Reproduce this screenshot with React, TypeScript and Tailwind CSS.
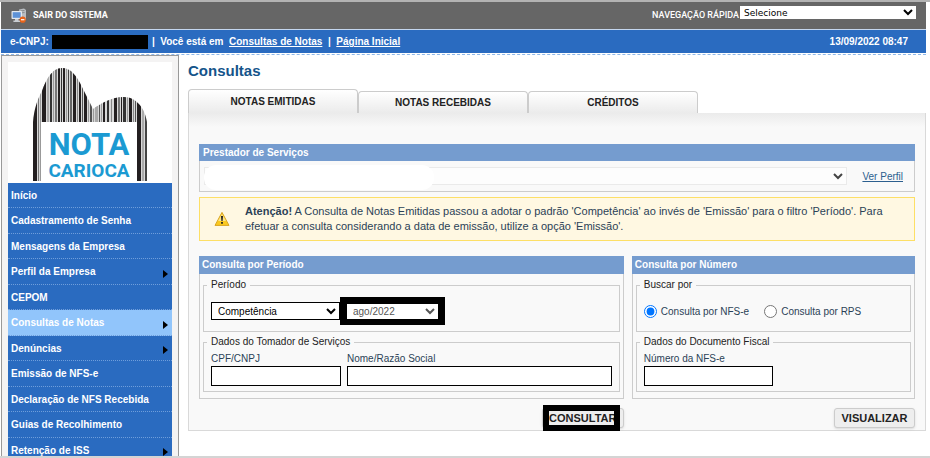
import { ReactNode, useState } from "react";

const MENU = [
  { label: "Início" },
  { label: "Cadastramento de Senha" },
  { label: "Mensagens da Empresa" },
  { label: "Perfil da Empresa", sub: true },
  { label: "CEPOM" },
  { label: "Consultas de Notas", sub: true, active: true },
  { label: "Denúncias", sub: true },
  { label: "Emissão de NFS-e" },
  { label: "Declaração de NFS Recebida" },
  { label: "Guias de Recolhimento" },
  { label: "Retenção de ISS", sub: true },
];

const TABS = ["NOTAS EMITIDAS", "NOTAS RECEBIDAS", "CRÉDITOS"];

// x, width, color
const BARS: [number, number, string][] = [
  [25, 4, "#231f20"], [30, 1, "#777"], [32, 1, "#999"], [34, 4, "#231f20"], [39, 2, "#aaa"],
  [42, 2, "#333"], [45, 1, "#999"], [47, 2, "#777"], [50, 2, "#231f20"], [53, 1, "#333"],
  [55, 2, "#231f20"], [58, 1, "#999"], [60, 1, "#444"], [62, 2, "#666"], [65, 3, "#231f20"],
  [69, 1, "#888"], [71, 2, "#231f20"], [74, 1, "#555"], [76, 3, "#231f20"], [80, 1, "#999"],
  [82, 2, "#555"], [85, 1, "#999"], [87, 3, "#aaa"], [91, 1, "#555"], [93, 1, "#999"],
  [95, 2, "#231f20"], [99, 2, "#333"], [103, 1, "#888"], [106, 3, "#231f20"], [110, 2, "#777"],
  [113, 1, "#231f20"], [115, 3, "#333"], [119, 1, "#999"], [121, 3, "#231f20"], [125, 1, "#888"],
  [127, 1, "#555"], [129, 4, "#231f20"], [134, 2, "#aaa"], [137, 2, "#444"],
];

function Logo() {
  return (
    <svg viewBox="0 0 164 121" className="block h-[121px] w-full bg-white" role="img" aria-label="Nota Carioca">
      <clipPath id="hills">
        <path d="M25 119V60C26 48 29 38 34 29C38 18 44 6 54 6C63 6 69 14 74 25L85 47C91 43 102 35 116 35C128 35 137 46 139 60V119H129V60H33V119Z" />
      </clipPath>
      <g clipPath="url(#hills)">
        <rect x="25" y="0" width="115" height="121" fill="#d8d8d8" />
        {BARS.map(([x, w, fill]) => (
          <rect key={x} x={x} y="0" width={w} height="121" fill={fill} />
        ))}
      </g>
      <g fill="#1b9ad2" fontFamily="Roboto, sans-serif" fontWeight="700" textAnchor="middle">
        <text x="81" y="93" fontSize="31">NOTA</text>
        <text x="81" y="115" fontSize="19">CARIOCA</text>
      </g>
    </svg>
  );
}

function ExitIcon() {
  return (
    <svg viewBox="0 0 16 16" className="h-4 w-4">
      <path d="M8 1.5l5-1 2 1.5v10l-5 1z" fill="#b9bdc2" />
      <path d="M9.5 3l4-.6M9.5 5l4-.5" stroke="#777" strokeWidth=".7" />
      <rect x=".5" y="3" width="10.5" height="8" rx=".7" fill="#e4e8ec" />
      <rect x="1.7" y="4.2" width="8" height="5.6" fill="#5e92d6" />
      <path d="M4 11h3.5v1.5h1.8V14H2.4v-1.5H4z" fill="#c9cdd2" />
      <circle cx="11.7" cy="11.7" r="3.1" fill="#e8641b" />
      <rect x="10" y="11.1" width="3.4" height="1.2" fill="#fff" />
    </svg>
  );
}

function WarningIcon() {
  return (
    <svg viewBox="0 0 16 16" className="h-4 w-4 shrink-0">
      <path d="M8 1.4L15 14.4H1z" fill="#fbc91f" stroke="#d9a520" strokeWidth="1" strokeLinejoin="round" />
      <path d="M8 3l4 7H4z" fill="#fde48a" />
      <path d="M7 5h2l-.4 5H7.4zM7.1 11h1.8v1.8H7.1z" fill="#222" />
    </svg>
  );
}

function Box({ title, children }: { title: string; children: ReactNode }) {
  return (
    <section>
      <h2 className="h-[18px] bg-[#759ccf] px-[3px] text-[10px] leading-[18px] font-bold text-white">{title}</h2>
      <div className="flex flex-col gap-[3px] border border-t-0 border-[#ccc] px-[3px] pt-1 pb-[6px]">{children}</div>
    </section>
  );
}

function Group({ legend, children }: { legend: string; children: ReactNode }) {
  return (
    <fieldset className="min-w-0 border border-[#ccc] px-[7px]">
      <legend className="-ml-1 px-1 text-[10px] leading-[14px] text-[#222]">{legend}</legend>
      {children}
    </fieldset>
  );
}

const field = "block h-5 border border-black bg-white px-1";
const button =
  "h-5 rounded-[3px] border border-[#ccc] bg-[#eee] text-[11px] leading-[18px] font-bold text-[#222] shadow-sm";

export default function App() {
  const [tab, setTab] = useState(0);
  const [mode, setMode] = useState("nfse");

  return (
    <div className="flex h-screen flex-col overflow-hidden border-y-2 border-t-[#b3b3b3] border-b-[#d4d4d4] bg-white pr-1 pl-px font-['Liberation_Sans',Arial,sans-serif] text-[11px] text-[#2b4257]">
      <header className="shrink-0 font-bold text-white">
        <div className="flex h-[27px] items-center bg-[#666] pr-[10px] pl-[10px]">
          <button className="flex items-center gap-[6px] font-[Roboto,sans-serif] text-[9px]">
            <ExitIcon />
            SAIR DO SISTEMA
          </button>
          <label htmlFor="nav" className="ml-auto font-[Roboto,sans-serif] text-[9px] font-medium">
            NAVEGAÇÃO RÁPIDA
          </label>
          <select id="nav" className="ml-px mb-[6px] h-[13px] w-44 bg-white font-['DejaVu_Sans',sans-serif] text-[9px] font-normal text-black">
            <option>Selecione</option>
          </select>
        </div>
        <div className="flex h-6 items-center border-t border-[#c5d7ef] bg-[#2a6bc0] pr-[18px] pl-[9px] text-[10px]">
          <span>e-CNPJ:</span>
          <span className="ml-[3px] h-[14px] w-24 bg-black" />
          <span className="ml-1 whitespace-pre">|  Você está em&nbsp; </span>
          <a href="#consultas" className="underline">Consultas de Notas</a>
          <span className="whitespace-pre">&nbsp; |&nbsp; </span>
          <a href="#inicio" className="underline">Página Inicial</a>
          <time className="ml-auto">13/09/2022 08:47</time>
        </div>
        <div className="mt-px border-t border-dashed border-[#8fb8ea]" />
      </header>

      <div className="flex min-h-0 flex-1">
        <aside className="w-[178px] shrink-0 border border-b-0 border-[#999] bg-[#f4f3f3] px-[6px] pt-[6px]">
          <Logo />
          <nav>
            <ul>
              {MENU.map((m) => (
                <li key={m.label} className="odd:h-[25px] even:h-[26px]">
                  <a
                    href="#menu"
                    className={`flex h-full items-center justify-between border-b border-dotted border-[#6f9edb] pr-1 pl-[3px] text-[10px] font-bold text-white ${m.active ? "bg-[#91c5fb]" : "bg-[#2a6bc0]"}`}
                  >
                    {m.label}
                    {m.sub && (
                      <svg viewBox="0 0 5 8" className="mt-1 h-2 w-[5px]">
                        <path d="M0 0l5 4-5 4z" fill="#000" />
                      </svg>
                    )}
                  </a>
                </li>
              ))}
            </ul>
          </nav>
        </aside>

        <main className="min-w-0 flex-1 pl-[9px]">
          <h1 className="pt-[7px] text-[15px] leading-[18px] font-bold text-[#14548a]">Consultas</h1>

          <div role="tablist" className="mt-[9px] flex h-6 items-end">
            {TABS.map((t, i) => (
              <button
                key={t}
                role="tab"
                aria-selected={tab === i}
                onClick={() => setTab(i)}
                className={`w-[170px] rounded-t-[4px] border border-b-0 border-[#ccc] bg-linear-to-b from-white to-[#ebebeb] text-[10px] font-bold text-[#222] ${tab === i ? "h-6" : "h-[22px]"}`}
              >
                {t}
              </button>
            ))}
          </div>

          <div className="border border-t-0 border-[#d9d9d9] bg-[#f9f9f9]">
            <div className="h-[14px] bg-linear-to-b from-[#ebebeb] to-[#f9f9f9]" />
            <div className="px-[10px] pt-[17px] pb-[2px]">
              <section>
                <h2 className="h-[17px] bg-[#759ccf] px-1 text-[10px] leading-[17px] font-bold text-white">
                  <label htmlFor="prestador">Prestador de Serviços</label>
                </h2>
                <div className="relative flex h-[31px] items-center border border-t-0 border-[#ccc] pr-[11px] pl-1">
                  <select id="prestador" className="h-[18px] min-w-0 flex-1 border border-[#eaeaea] bg-[#fdfdfd] text-[#444]">
                    <option></option>
                  </select>
                  <span className="absolute top-1 left-1 h-[25px] w-[230px] rounded-[12px] bg-white" />
                  <a href="#perfil" className="ml-[15px] text-[10px] text-[#2c5f8f] underline">Ver Perfil</a>
                </div>
              </section>

              <div className="mt-[5px] flex h-11 items-center gap-[15px] border border-[#fddf66] bg-[#fff8e2] pr-1 pl-[14px]">
                <WarningIcon />
                <p className="leading-[15px]">
                  <strong>Atenção!</strong> A Consulta de Notas Emitidas passou a adotar o padrão 'Competência' ao invés de 'Emissão' para o filtro 'Período'. Para efetuar a consulta considerando a data de emissão, utilize a opção 'Emissão'.
                </p>
              </div>

              <div className="mt-[15px] grid grid-cols-[3fr_2fr] gap-x-2">
                <Box title="Consulta por Período">
                  <Group legend="Período">
                    <div className="flex h-[39px] items-center pb-[1px]">
                      <select aria-label="Tipo de período" className="h-[18px] w-[129px] border border-black bg-white px-[2px] text-[10px] text-black">
                        <option>Competência</option>
                      </select>
                      <span className="flex h-7 w-[105px] items-center bg-black px-[7px]">
                        <select aria-label="Mês" className="h-[15px] w-full bg-white px-[2px] text-[10px] text-[#555]">
                          <option>ago/2022</option>
                        </select>
                      </span>
                    </div>
                  </Group>
                  <Group legend="Dados do Tomador de Serviços">
                    <div className="flex gap-[6px] pt-[2px] pb-[5px]">
                      <label className="w-[130px] text-[10px] leading-[15px]">
                        CPF/CNPJ
                        <input className={`${field} w-full`} />
                      </label>
                      <label className="flex-1 text-[10px] leading-[15px]">
                        Nome/Razão Social
                        <input className={`${field} w-full`} />
                      </label>
                    </div>
                  </Group>
                </Box>

                <Box title="Consulta por Número">
                  <Group legend="Buscar por">
                    <div className="flex h-[39px] items-center gap-[15px] text-[10px]">
                      <label className="flex items-center gap-1">
                        <input type="radio" name="mode" className="h-[13px] w-[13px]" checked={mode === "nfse"} onChange={() => setMode("nfse")} />
                        Consulta por NFS-e
                      </label>
                      <label className="flex items-center gap-1">
                        <input type="radio" name="mode" className="h-[13px] w-[13px]" checked={mode === "rps"} onChange={() => setMode("rps")} />
                        Consulta por RPS
                      </label>
                    </div>
                  </Group>
                  <Group legend="Dados do Documento Fiscal">
                    <label className="block w-[129px] pt-[2px] pb-[5px] text-[10px] leading-[15px]">
                      Número da NFS-e
                      <input className={`${field} w-full`} />
                    </label>
                  </Group>
                </Box>

                <div className="relative mt-[9px] justify-self-end">
                  <button className={`${button} w-[82px]`}>CONSULTAR</button>
                  <span className="pointer-events-none absolute -top-[3px] right-1 h-[26px] w-[77px] border-[6px] border-black" />
                </div>
                <button className={`${button} mt-[9px] w-[81px] justify-self-end`}>VISUALIZAR</button>
              </div>
            </div>
          </div>
        </main>
      </div>
    </div>
  );
}
